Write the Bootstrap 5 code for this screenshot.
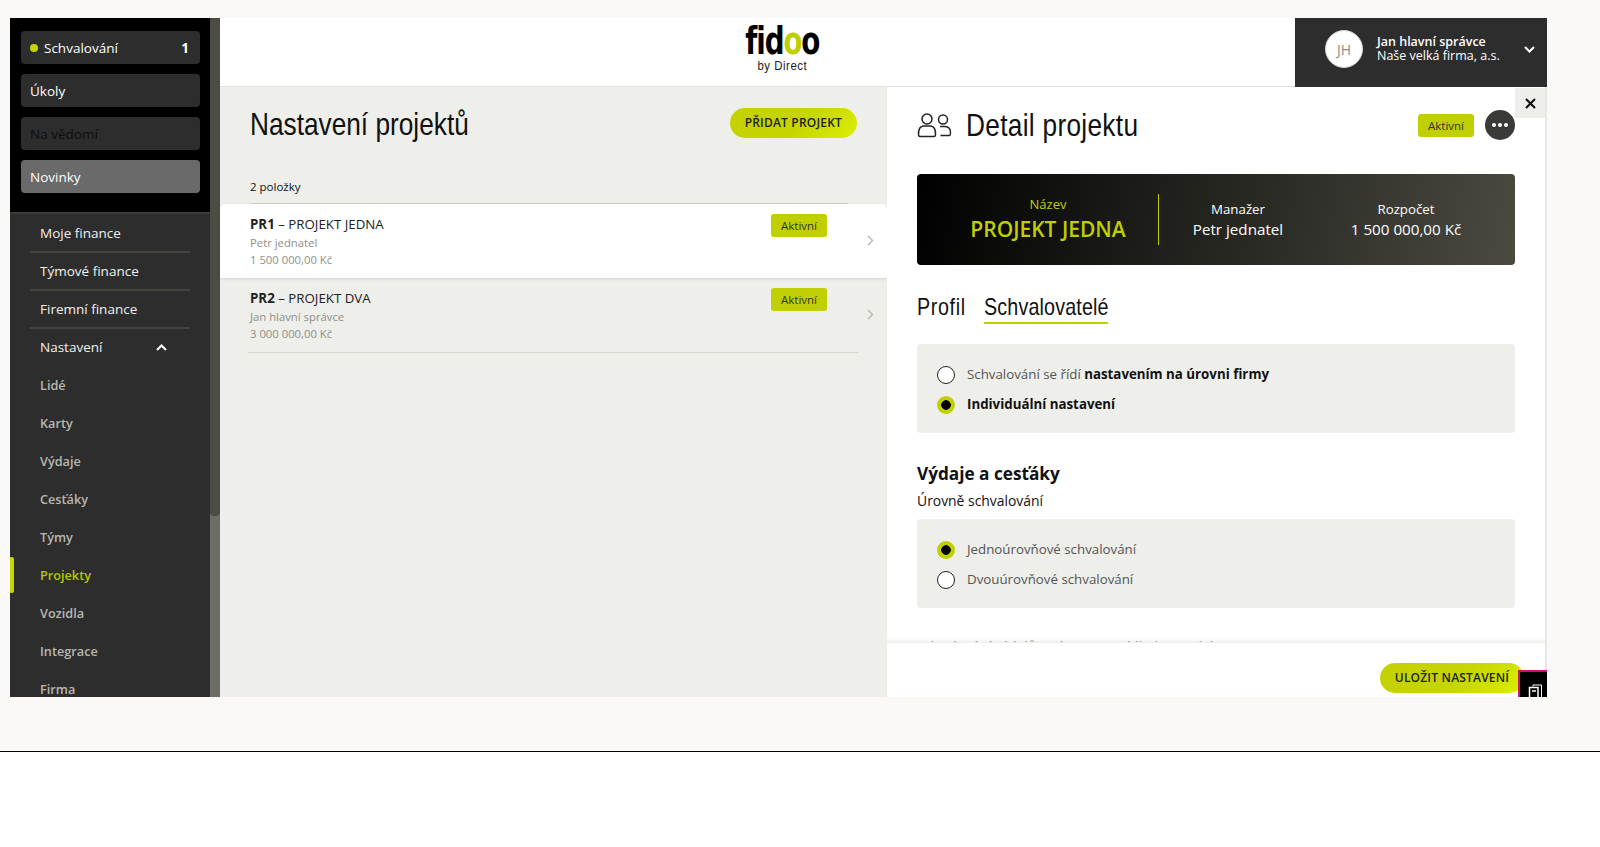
<!DOCTYPE html>
<html lang="cs">
<head>
    <meta charset="UTF-8">
    <meta name="viewport" content="width=device-width, initial-scale=1.0">
    <title>Fidoo - Nastavení projektů</title>
    <link href="https://cdn.jsdelivr.net/npm/bootstrap@5.3.0/dist/css/bootstrap.min.css" rel="stylesheet">
    <script src="https://cdn.jsdelivr.net/npm/bootstrap@5.3.0/dist/js/bootstrap.bundle.min.js"></script>
    <style>
        html, body {
            background-color: #fff;
            font-family: "Open Sans", "Liberation Sans", sans-serif;
            font-size: 13px;
            color: #111;
            overflow: hidden;
        }
        .page-wrap {
            height: 752px;
            background-color: #faf9f7;
            border-bottom: 1px solid #000;
            padding: 18px 53px 0 10px;
        }
        .app-frame {
            height: 679px;
            overflow: hidden;
        }
        /* uzky nadpisovy font neni k dispozici, proto zuzeni */
        .squeeze {
            display: inline-block;
            font-family: "Liberation Sans", sans-serif;
            white-space: nowrap;
            transform: scaleX(.82);
            transform-origin: left center;
        }

        /* levy sloupec */
        .side-col {
            width: 200px;
            flex: none;
            background-color: #2d2d2d;
            position: relative;
        }
        .side-top {
            height: 196px;
            background-color: #000;
            padding: 13px 10px 0 11px;
            border-bottom: 2px solid #3c3c36;
        }
        .side-btn {
            height: 33px;
            line-height: 33px;
            padding: 1px 11px 0 9px;
            margin-bottom: 10px;
            background-color: #2d2d2d;
            border-radius: 4px;
            color: #fff;
            font-size: 13.5px;
        }
        .side-btn.muted-btn { color: #0d0d0d; }
        .side-btn.on-btn { background-color: #6a6a6a; }
        .green-dot {
            width: 8px;
            height: 8px;
            border-radius: 50%;
            background-color: #c4d600;
            margin-right: 6px;
        }
        .side-list {
            padding: 1px 20px 0 20px;
        }
        .side-link {
            display: flex;
            align-items: center;
            justify-content: space-between;
            height: 38px;
            padding: 0 23px 0 10px;
            color: #f1f1ee;
            font-size: 13.5px;
            text-decoration: none;
            border-bottom: 2px solid #45453f;
        }
        .side-link.plain {
            height: 37px;
            border-bottom: 0;
        }
        .side-sub {
            display: block;
            height: 38px;
            line-height: 38px;
            padding-left: 10px;
            color: #b8b8b2;
            font-size: 12.7px;
            font-weight: 600;
            text-decoration: none;
        }
        .side-sub.current { color: #b5c800; }
        .current-mark {
            position: absolute;
            left: 0;
            top: 539px;
            width: 4px;
            height: 36px;
            background-color: #c4d600;
            border-radius: 0 2px 2px 0;
        }
        .side-scroll {
            width: 10px;
            flex: none;
            background-color: #6e6e66;
        }
        .side-thumb {
            height: 498px;
            background-color: #4d4c44;
            border-radius: 0 0 4px 4px;
        }

        /* hlavicka */
        .top-head {
            height: 69px;
            background-color: #fff;
            border-bottom: 1px solid #e2e2dc;
        }
        .logo-box {
            padding: 9px 0 0 50px;
            line-height: 1;
        }
        .logo-word {
            font-family: "DejaVu Sans", sans-serif;
            font-weight: 700;
            font-size: 37px;
            letter-spacing: -1.5px;
            transform: scaleX(.75);
            color: #000;
            line-height: 30px;
        }
        .logo-word span { color: #c0cf00; }
        .logo-sub {
            font-family: "Liberation Sans", sans-serif;
            font-size: 13px;
            letter-spacing: .6px;
            color: #222;
            margin-top: 2px;
            transform: scaleX(.88);
        }
        .user-box {
            width: 252px;
            height: 69px;
            flex: none;
            background-color: #2d2d2d;
            color: #fff;
            padding: 0 12px 7px 30px;
        }
        .user-avatar {
            width: 38px;
            height: 38px;
            border-radius: 50%;
            background-color: #fff;
            color: #8a8a84;
            font-size: 14px;
            border: 1px solid #d6d6ce;
        }
        .user-text {
            font-size: 12.5px;
            line-height: 14px;
            margin-left: 14px;
        }

        /* seznam */
        .main-col {
            width: 667px;
            flex: none;
            background-color: #eeeeea;
        }
        .main-head {
            height: 117px;
            padding: 21px 30px 0 30px;
        }
        .page-title {
            font-size: 32px;
            line-height: 36px;
            margin: -2px 0 0 0;
            font-weight: 400;
        }
        .lime-btn {
            background: linear-gradient(135deg, #c4d000 0%, #c6d600 55%, #dcee00 100%);
            border: 0;
            border-radius: 16px;
            height: 30px;
            line-height: 30px;
            padding: 0 15px;
            font-size: 12px;
            font-weight: 600;
            color: #222;
            letter-spacing: .2px;
        }
        .count-row {
            margin: -23px 39px 0 30px;
            height: 23px;
            line-height: 12px;
            font-size: 11.5px;
            border-bottom: 1px solid #cfcfc9;
        }
        .proj-row {
            height: 74px;
            padding: 10px 13px 0 30px;
            background: transparent;
            border: 0;
            border-radius: 0;
        }
        .proj-row.sel {
            background-color: #fff;
            box-shadow: 0 1px 3px rgba(0, 0, 0, .12);
            position: relative;
        }
        .proj-name {
            font-size: 13.3px;
            line-height: 20px;
            color: #222;
        }
        .proj-sub {
            font-size: 11.3px;
            line-height: 17px;
            color: #8f8f89;
        }
        .state-pill {
            display: inline-block;
            width: 56px;
            height: 23px;
            line-height: 23px;
            text-align: center;
            background-color: #c0cf00;
            border-radius: 3px;
            color: #333;
            font-size: 11.5px;
            font-weight: 400;
            padding: 0;
        }
        .row-chevron {
            margin: 21px 0 0 40px;
            flex: none;
        }
        .row-rule {
            height: 1px;
            margin: 0 29px 0 28px;
            background-color: #d6d6d0;
        }

        /* detail */
        .detail-col {
            position: relative;
            flex: 1 1 auto;
            background-color: #fff;
            border-right: 2px solid #e8e8e2;
        }
        .detail-scroll {
            height: 556px;
            padding: 20px 30px 0 30px;
            overflow: hidden;
            box-shadow: inset 0 -6px 6px -6px rgba(0, 0, 0, .1);
            border-bottom: 1px solid #eeeeea;
        }
        .close-box {
            position: absolute;
            top: 1px;
            right: 0;
            width: 30px;
            height: 30px;
            background-color: #eeeeea;
            border: 0;
            padding: 0;
        }
        .detail-title {
            font-size: 32px;
            line-height: 36px;
            letter-spacing: .37px;
            margin: 0 0 0 14px;
            font-weight: 400;
        }
        .more-dots {
            width: 30px;
            height: 30px;
            border-radius: 50%;
            background-color: #3a3a38;
            margin-left: 11px;
            gap: 2px;
        }
        .more-dots i {
            display: block;
            width: 4px;
            height: 4px;
            background-color: #fff;
            border-radius: 50%;
        }
        .info-card {
            height: 91px;
            margin-top: 31px;
            border-radius: 4px;
            background: linear-gradient(100deg, #000 0%, #4a4a41 100%);
            color: #fff;
            text-align: center;
        }
        .info-name {
            width: 242px;
            height: 51px;
            flex: none;
            padding: 0 1px 0 22px;
            border-right: 1px solid #c0cf00;
            color: #c0cf00;
            line-height: 1;
        }
        .info-name small {
            display: block;
            font-size: 13px;
            margin: -2px 0 8px 0;
        }
        .info-name strong {
            font-size: 21px;
            font-weight: 600;
        }
        .info-cell {
            font-size: 15.2px;
            line-height: 20px;
            padding-bottom: 2px;
        }
        .info-cell div:first-child { font-size: 13.3px; }
        .cell-manager { width: 158px; }
        .cell-budget { width: 178px; }
        .tab-line {
            margin-top: 27px;
            gap: 19px;
        }
        .tab-link {
            padding: 0 0 2px 0;
            font-size: 24px;
            line-height: 27px;
            letter-spacing: .2px;
            color: #111;
            text-decoration: none;
            border-bottom: 2px solid transparent;
        }
        .tab-link.active { border-bottom-color: #c0cf00; }
        .tab-profile { width: 48px; letter-spacing: .8px; }
        .tab-approvers { width: 124px; }
        .option-box {
            height: 89px;
            background-color: #eeeeea;
            border-radius: 4px;
            padding: 16px 20px 0 20px;
            margin-top: 20px;
        }
        .option-row {
            height: 30px;
            margin: 0;
            padding: 0;
            min-height: 0;
            font-size: 13.3px;
            color: #555;
        }
        .option-row strong { color: #111; font-weight: 700; }
        .radio-mark {
            appearance: none;
            width: 18px;
            height: 18px;
            margin: 0 12px 0 0;
            border-radius: 50%;
            background-color: #fff;
            border: 1px solid #222;
            flex: none;
        }
        .radio-mark:checked {
            border: 0;
            background: radial-gradient(circle, #000 0 4.5px, #c0cf00 5px);
        }
        .section-head {
            font-size: 17.2px;
            font-weight: 700;
            line-height: 24px;
            margin: 29px 0 6px 0;
        }
        .section-sub {
            font-size: 13.9px;
            line-height: 18px;
        }
        .option-box.second { margin-top: 9px; }
        .cut-text {
            margin-top: 29px;
            font-size: 13px;
            line-height: 18px;
            color: #9a9a94;
            font-weight: 600;
        }
        .detail-foot {
            height: 54px;
            padding: 20px 0 0 0;
            position: relative;
        }
        .save-btn {
            position: absolute;
            left: 493px;
            top: 20px;
            width: 144px;
            padding: 0;
        }
        .corner-widget {
            position: absolute;
            right: -2px;
            bottom: 0;
            width: 29px;
            height: 27px;
            background-color: #000;
            border-top: 2px solid #d0106e;
            border-left: 2px solid #d0106e;
        }
    </style>
</head>
<body>
    <div class="page-wrap">
        <div class="app-frame d-flex">
            <div class="d-flex flex-shrink-0">
                <aside class="side-col">
                    <div class="side-top">
                        <div class="side-btn d-flex align-items-center"><span class="green-dot"></span>Schvalování<span class="ms-auto fw-bold">1</span></div>
                        <div class="side-btn">Úkoly</div>
                        <div class="side-btn muted-btn">Na vědomí</div>
                        <div class="side-btn on-btn">Novinky</div>
                    </div>
                    <div class="side-list">
                        <a class="side-link" href="#">Moje finance</a>
                        <a class="side-link" href="#">Týmové finance</a>
                        <a class="side-link" href="#">Firemní finance</a>
                        <a class="side-link plain" href="#">Nastavení
                            <svg width="11" height="7" viewBox="0 0 11 7"><path d="M1 6l4.500-4.500L10 6" fill="none" stroke="#fff" stroke-width="2"/></svg>
                        </a>
                        <a class="side-sub" href="#">Lidé</a>
                        <a class="side-sub" href="#">Karty</a>
                        <a class="side-sub" href="#">Výdaje</a>
                        <a class="side-sub" href="#">Cesťáky</a>
                        <a class="side-sub" href="#">Týmy</a>
                        <a class="side-sub current" href="#">Projekty</a>
                        <a class="side-sub" href="#">Vozidla</a>
                        <a class="side-sub" href="#">Integrace</a>
                        <a class="side-sub" href="#">Firma</a>
                    </div>
                    <span class="current-mark"></span>
                </aside>
                <div class="side-scroll"><div class="side-thumb"></div></div>
            </div>

            <div class="flex-grow-1 d-flex flex-column">
                <header class="top-head d-flex">
                    <div class="logo-box flex-grow-1 d-flex flex-column align-items-center">
                        <div class="logo-word">fid<span>o</span>o</div>
                        <div class="logo-sub">by Direct</div>
                    </div>
                    <div class="user-box d-flex align-items-center">
                        <div class="user-avatar d-flex align-items-center justify-content-center">JH</div>
                        <div class="user-text">
                            <div class="fw-semibold">Jan hlavní správce</div>
                            <div>Naše velká firma, a.s.</div>
                        </div>
                        <svg class="ms-auto" width="11" height="7" viewBox="0 0 11 7"><path d="M1 1l4.500 4.500L10 1" fill="none" stroke="#fff" stroke-width="2"/></svg>
                    </div>
                </header>

                <div class="d-flex flex-grow-1">
                    <section class="main-col">
                        <div class="main-head d-flex justify-content-between align-items-start">
                            <h1 class="page-title squeeze">Nastavení projektů</h1>
                            <button class="btn lime-btn" type="button">PŘIDAT PROJEKT</button>
                        </div>
                        <div class="count-row">2 položky</div>
                        <div class="list-group">
                            <div class="list-group-item proj-row sel d-flex">
                                <div class="flex-grow-1">
                                    <div class="proj-name"><strong>PR1</strong> – PROJEKT JEDNA</div>
                                    <div class="proj-sub">Petr jednatel</div>
                                    <div class="proj-sub">1 500 000,00 Kč</div>
                                </div>
                                <span class="badge state-pill">Aktivní</span>
                                <svg class="row-chevron" width="7" height="11" viewBox="0 0 7 11"><path d="M1 1l4.500 4.500L1 10" fill="none" stroke="#b5b5ae" stroke-width="1.300"/></svg>
                            </div>
                            <div class="list-group-item proj-row d-flex">
                                <div class="flex-grow-1">
                                    <div class="proj-name"><strong>PR2</strong> – PROJEKT DVA</div>
                                    <div class="proj-sub">Jan hlavní správce</div>
                                    <div class="proj-sub">3 000 000,00 Kč</div>
                                </div>
                                <span class="badge state-pill">Aktivní</span>
                                <svg class="row-chevron" width="7" height="11" viewBox="0 0 7 11"><path d="M1 1l4.500 4.500L1 10" fill="none" stroke="#b5b5ae" stroke-width="1.300"/></svg>
                            </div>
                        </div>
                        <div class="row-rule"></div>
                    </section>

                    <section class="detail-col">
                        <button class="close-box d-flex align-items-center justify-content-center" type="button" aria-label="Zavřít">
                            <svg width="11" height="11" viewBox="0 0 11 11"><path d="M1 1l9 9M10 1l-9 9" stroke="#111" stroke-width="2.200"/></svg>
                        </button>
                        <div class="detail-scroll">
                            <div class="d-flex align-items-center">
                                <svg width="35" height="26" viewBox="0 0 35 26" fill="none" stroke="#222" stroke-width="1.500">
                                    <circle cx="10" cy="7" r="5"/>
                                    <path d="M1.500 23c-.500-6 2-9 5-9h7c3 0 5.500 3 5 9-.100 1-.500 1.500-1.500 1.500H3c-1 0-1.400-.500-1.500-1.500z"/>
                                    <circle cx="26" cy="7.500" r="4.500"/>
                                    <path d="M23 14.500h5c3.500 0 6 2.500 5.500 7-.100 1-.500 2-1.500 2h-8.500"/>
                                </svg>
                                <h2 class="detail-title squeeze">Detail projektu</h2>
                                <span class="badge state-pill ms-auto">Aktivní</span>
                                <div class="more-dots d-flex align-items-center justify-content-center"><i></i><i></i><i></i></div>
                            </div>

                            <div class="info-card d-flex align-items-center">
                                <div class="info-name d-flex flex-column justify-content-center">
                                    <small>Název</small>
                                    <strong>PROJEKT JEDNA</strong>
                                </div>
                                <div class="info-cell cell-manager">
                                    <div>Manažer</div>
                                    <div>Petr jednatel</div>
                                </div>
                                <div class="info-cell cell-budget">
                                    <div>Rozpočet</div>
                                    <div>1 500 000,00 Kč</div>
                                </div>
                            </div>

                            <nav class="nav tab-line">
                                <a class="tab-link tab-profile" href="#"><span class="squeeze">Profil</span></a>
                                <a class="tab-link tab-approvers active" href="#"><span class="squeeze">Schvalovatelé</span></a>
                            </nav>

                            <div class="option-box">
                                <label class="option-row d-flex align-items-center"><input class="radio-mark" type="radio" name="approval"><span>Schvalování se řídí <strong>nastavením na úrovni firmy</strong></span></label>
                                <label class="option-row d-flex align-items-center"><input class="radio-mark" type="radio" name="approval" checked><strong>Individuální nastavení</strong></label>
                            </div>

                            <h3 class="section-head">Výdaje a cesťáky</h3>
                            <div class="section-sub">Úrovně schvalování</div>

                            <div class="option-box second">
                                <label class="option-row d-flex align-items-center"><input class="radio-mark" type="radio" name="levels" checked>Jednoúrovňové schvalování</label>
                                <label class="option-row d-flex align-items-center"><input class="radio-mark" type="radio" name="levels">Dvouúrovňové schvalování</label>
                            </div>

                            <div class="cut-text">Schvalování výdajů nad stanovený limit v projektu</div>
                        </div>
                        <div class="detail-foot">
                            <button class="btn lime-btn save-btn" type="button">ULOŽIT NASTAVENÍ</button>
                            <div class="corner-widget d-flex align-items-end justify-content-end">
                                <svg width="20" height="13" viewBox="0 0 20 13" fill="none"><path d="M6 2.500V1h8.500v12" stroke="#fff"/><path d="M2.500 13V3.500h8.500V13" stroke="#fff" stroke-width="1.500"/><path d="M5 7h4" stroke="#fff" stroke-width="1.500"/></svg>
                            </div>
                        </div>
                    </section>
                </div>
            </div>
        </div>
    </div>
</body>
</html>
